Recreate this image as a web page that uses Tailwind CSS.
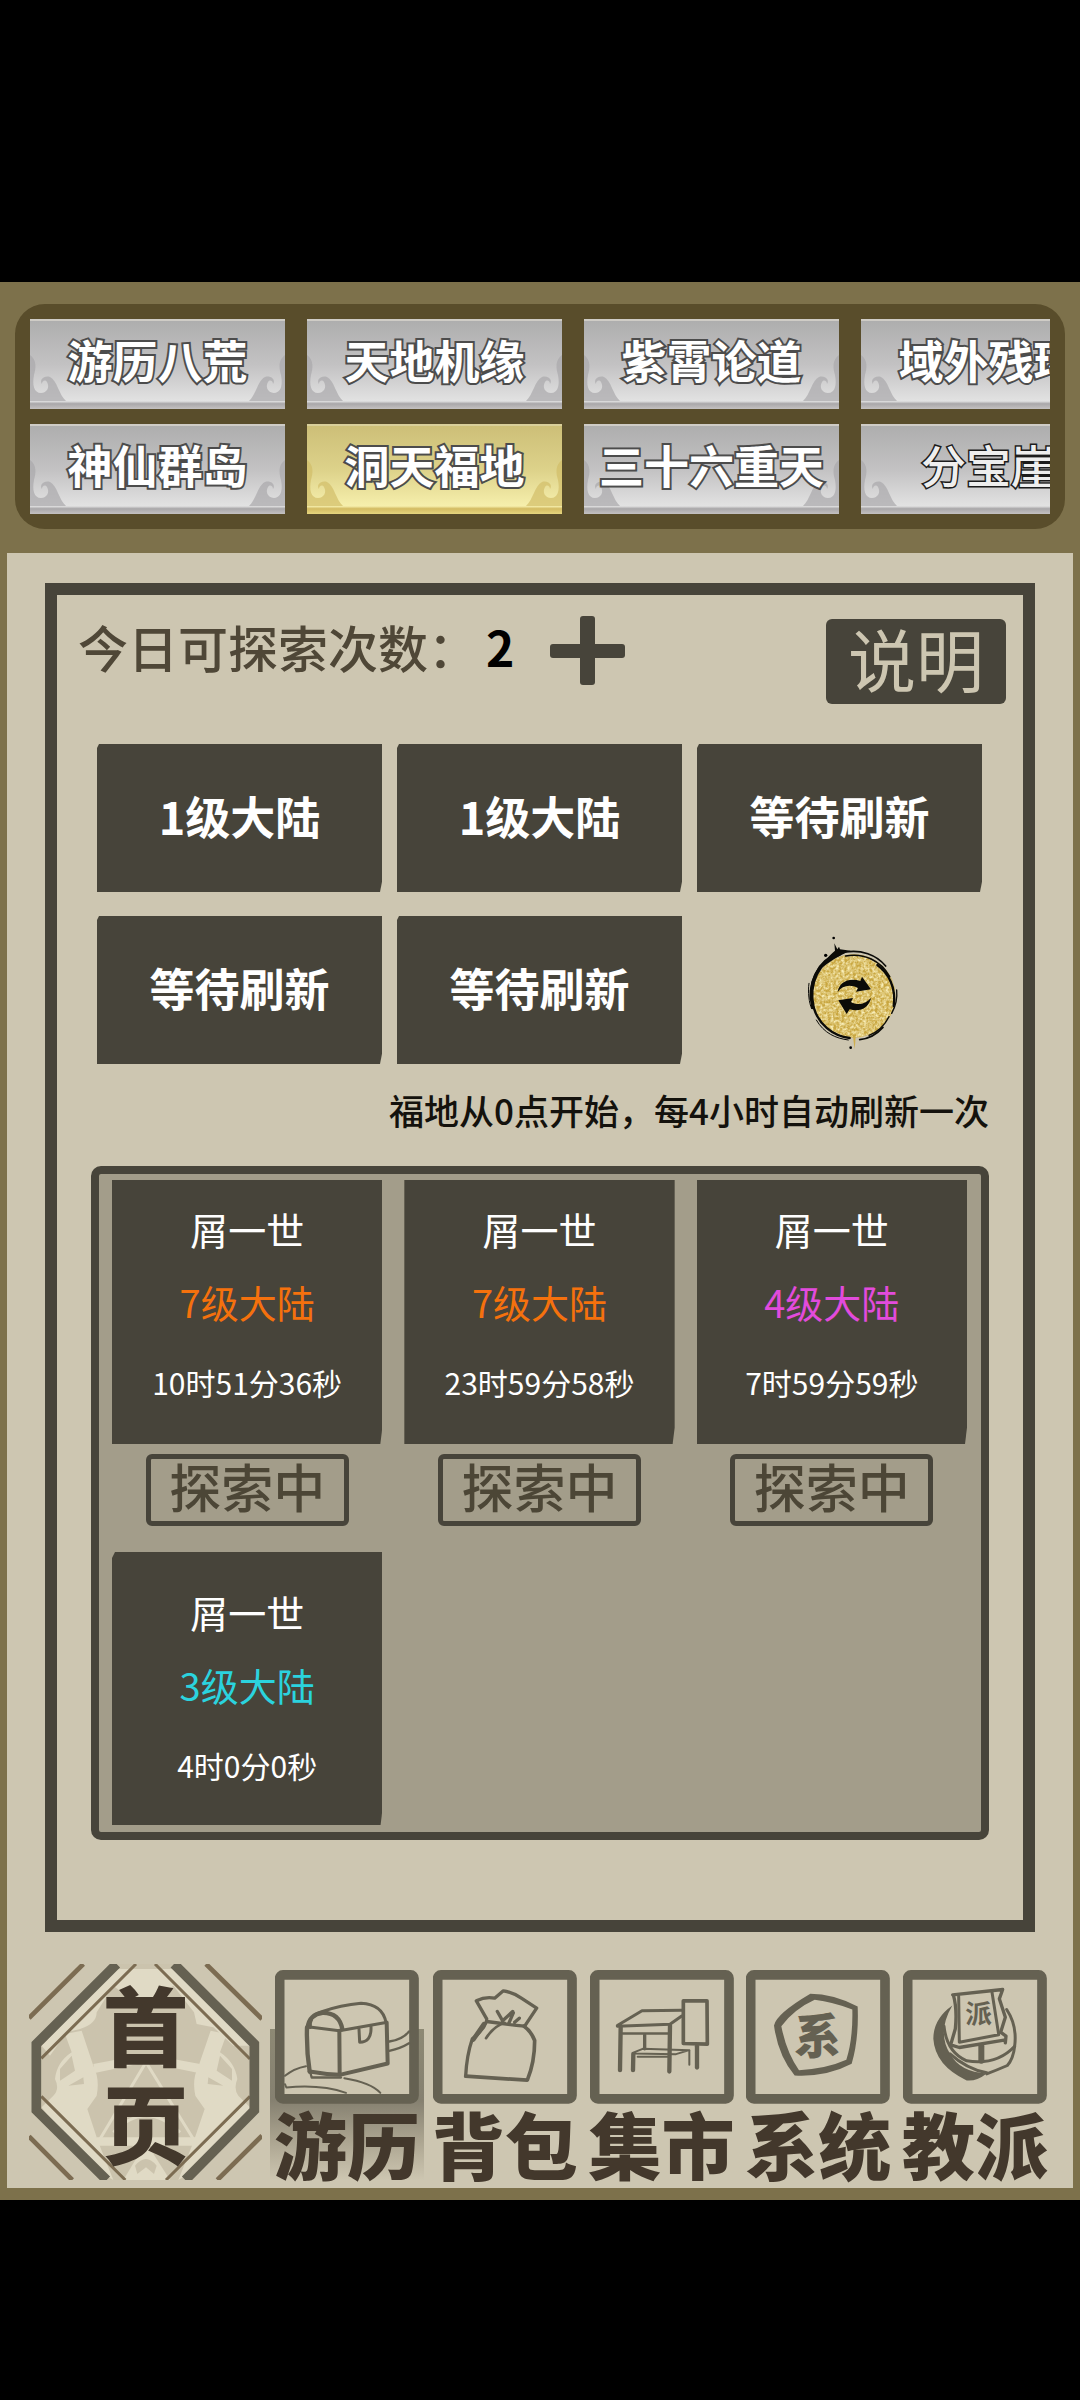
<!DOCTYPE html>
<html lang="zh-CN">
<head>
  <meta charset="UTF-8" />
  <meta name="viewport" content="width=device-width, initial-scale=1.0" />
  <title>洞天福地</title>
  <script src="https://cdn.jsdelivr.net/npm/@tailwindcss/browser@4"></script>
</head>
<body class="bg-black min-h-screen pt-[282px] font-['Noto_Sans_CJK_SC',sans-serif]">

<!-- shared shapes -->
<svg class="hidden">
  <symbol id="horn" viewBox="0 0 36 46">
    <path d="M0 0 C7 5 6 13 4 20 C2 30 4 38 11 38 C17 38 20 32 17 27 C15 24 12 26 12 29 C9 25 14 20 20 22 C27 25 29 40 36 46 L0 46 Z" fill="currentColor"/>
  </symbol>
</svg>

<main class="bg-[#7d714b] pt-[22px] pb-3">

  <!-- Top tabs -->
  <nav class="mx-[15px] p-[15px] rounded-[30px] bg-[#594d2b]">
    <div class="grid grid-rows-2 grid-flow-col auto-cols-[255px] gap-x-[22px] gap-y-[15px] overflow-hidden">
      <button class="relative h-[90px] pb-3 border-t-2 border-[#cfccc6] bg-[linear-gradient(#aeaeae,#c3c2c3_50%,#e2e2e2_91%,#a9a7a9_94%,#c4c1c1)] text-[45px] leading-none font-bold text-white [-webkit-text-stroke:4px_#4c4c4c] [paint-order:stroke_fill]">
        <svg class="absolute left-0 bottom-2 w-9 h-[46px] text-[#a9a8ab]/70"><use href="#horn"/></svg>
        <svg class="absolute right-0 bottom-2 w-9 h-[46px] text-[#a9a8ab]/70 -scale-x-100"><use href="#horn"/></svg>
        <span class="relative">游历八荒</span>
      </button>
      <button class="relative h-[90px] pb-3 border-t-2 border-[#cfccc6] bg-[linear-gradient(#aeaeae,#c3c2c3_50%,#e2e2e2_91%,#a9a7a9_94%,#c4c1c1)] text-[45px] leading-none font-bold text-white [-webkit-text-stroke:4px_#4c4c4c] [paint-order:stroke_fill]">
        <svg class="absolute left-0 bottom-2 w-9 h-[46px] text-[#a9a8ab]/70"><use href="#horn"/></svg>
        <svg class="absolute right-0 bottom-2 w-9 h-[46px] text-[#a9a8ab]/70 -scale-x-100"><use href="#horn"/></svg>
        <span class="relative">神仙群岛</span>
      </button>
      <button class="relative h-[90px] pb-3 border-t-2 border-[#cfccc6] bg-[linear-gradient(#aeaeae,#c3c2c3_50%,#e2e2e2_91%,#a9a7a9_94%,#c4c1c1)] text-[45px] leading-none font-bold text-white [-webkit-text-stroke:4px_#4c4c4c] [paint-order:stroke_fill]">
        <svg class="absolute left-0 bottom-2 w-9 h-[46px] text-[#a9a8ab]/70"><use href="#horn"/></svg>
        <svg class="absolute right-0 bottom-2 w-9 h-[46px] text-[#a9a8ab]/70 -scale-x-100"><use href="#horn"/></svg>
        <span class="relative">天地机缘</span>
      </button>
      <button class="relative h-[90px] pb-3 border-t-2 border-[#d9cf9a] bg-[linear-gradient(#cdbf78,#ddd28a_50%,#f6efac_91%,#d3bb62_94%,#e6d67f)] text-[45px] leading-none font-bold text-white [-webkit-text-stroke:4px_#4c4c4c] [paint-order:stroke_fill]">
        <svg class="absolute left-0 bottom-2 w-9 h-[46px] text-[#d2bd68]/70"><use href="#horn"/></svg>
        <svg class="absolute right-0 bottom-2 w-9 h-[46px] text-[#d2bd68]/70 -scale-x-100"><use href="#horn"/></svg>
        <span class="relative">洞天福地</span>
      </button>
      <button class="relative h-[90px] pb-3 border-t-2 border-[#cfccc6] bg-[linear-gradient(#aeaeae,#c3c2c3_50%,#e2e2e2_91%,#a9a7a9_94%,#c4c1c1)] text-[45px] leading-none font-bold text-white [-webkit-text-stroke:4px_#4c4c4c] [paint-order:stroke_fill]">
        <svg class="absolute left-0 bottom-2 w-9 h-[46px] text-[#a9a8ab]/70"><use href="#horn"/></svg>
        <svg class="absolute right-0 bottom-2 w-9 h-[46px] text-[#a9a8ab]/70 -scale-x-100"><use href="#horn"/></svg>
        <span class="relative">紫霄论道</span>
      </button>
      <button class="relative h-[90px] pb-3 border-t-2 border-[#cfccc6] bg-[linear-gradient(#aeaeae,#c3c2c3_50%,#e2e2e2_91%,#a9a7a9_94%,#c4c1c1)] text-[45px] leading-none font-bold text-white [-webkit-text-stroke:4px_#4c4c4c] [paint-order:stroke_fill]">
        <svg class="absolute left-0 bottom-2 w-9 h-[46px] text-[#a9a8ab]/70"><use href="#horn"/></svg>
        <svg class="absolute right-0 bottom-2 w-9 h-[46px] text-[#a9a8ab]/70 -scale-x-100"><use href="#horn"/></svg>
        <span class="relative">三十六重天</span>
      </button>
      <button class="relative h-[90px] pb-3 border-t-2 border-[#cfccc6] bg-[linear-gradient(#aeaeae,#c3c2c3_50%,#e2e2e2_91%,#a9a7a9_94%,#c4c1c1)] text-[45px] leading-none font-bold text-white [-webkit-text-stroke:4px_#4c4c4c] [paint-order:stroke_fill]">
        <svg class="absolute left-0 bottom-2 w-9 h-[46px] text-[#a9a8ab]/70"><use href="#horn"/></svg>
        <span class="relative">域外残环</span>
      </button>
      <button class="relative h-[90px] pb-3 border-t-2 border-[#cfccc6] bg-[linear-gradient(#aeaeae,#c3c2c3_50%,#e2e2e2_91%,#a9a7a9_94%,#c4c1c1)] text-[45px] leading-none font-medium text-[#eeeeee] [-webkit-text-stroke:3px_#1c1c1c] [paint-order:stroke_fill]">
        <svg class="absolute left-0 bottom-2 w-9 h-[46px] text-[#a9a8ab]/70"><use href="#horn"/></svg>
        <span class="relative">分宝崖</span>
      </button>
    </div>
  </nav>

  <section class="mt-6 mx-[7px] pt-[30px] pb-2 bg-[#cdc6b1]">

    <div class="mx-[38px] pt-6 pb-20 border-12 border-[#47443a]">

      <!-- Remaining explorations -->
      <div class="flex items-start justify-between pl-[21px] pr-[17px]">
        <div class="flex items-center h-[62px]">
          <span class="pb-2 text-[50px] leading-none font-medium text-[#4f4737] whitespace-nowrap">今日可探索次数：</span>
          <span class="ml-2 pb-2 text-5xl leading-none font-bold text-black">2</span>
          <button class="ml-9" aria-label="增加次数">
            <svg class="w-[75px] h-[69px]" viewBox="0 0 75 69" fill="#47443a">
              <rect x="0" y="28" width="75" height="14" rx="3"/>
              <rect x="30" y="0" width="15" height="69" rx="3"/>
            </svg>
          </button>
        </div>
        <button class="w-[180px] h-[85px] pb-2 rounded-md bg-[#47443a] text-[68px] leading-none text-[#cdc6b1]">说明</button>
      </div>

      <!-- Lands -->
      <div class="mt-10 pl-10 pr-[41px] grid grid-cols-3 gap-x-[15px] gap-y-6">
        <button class="h-[148px] pb-1 bg-[#47443a] text-[45px] font-bold text-white [clip-path:polygon(2px_0,100%_0,100%_93%,calc(100%-2px)_100%,0_100%,0_4px)]">1级大陆</button>
        <button class="h-[148px] pb-1 bg-[#47443a] text-[45px] font-bold text-white [clip-path:polygon(2px_0,100%_0,100%_93%,calc(100%-2px)_100%,0_100%,0_4px)]">1级大陆</button>
        <button class="h-[148px] pb-1 bg-[#47443a] text-[45px] font-bold text-white [clip-path:polygon(2px_0,100%_0,100%_93%,calc(100%-2px)_100%,0_100%,0_4px)]">等待刷新</button>
        <button class="h-[148px] pb-1 bg-[#47443a] text-[45px] font-bold text-white [clip-path:polygon(2px_0,100%_0,100%_93%,calc(100%-2px)_100%,0_100%,0_4px)]">等待刷新</button>
        <button class="h-[148px] pb-1 bg-[#47443a] text-[45px] font-bold text-white [clip-path:polygon(2px_0,100%_0,100%_93%,calc(100%-2px)_100%,0_100%,0_4px)]">等待刷新</button>
        <button class="flex items-center justify-center pl-7" aria-label="刷新">
          <svg class="w-[130px] h-[140px]" viewBox="0 0 390 420">
            <defs>
              <filter id="gold" x="0" y="0" width="100%" height="100%">
                <feTurbulence type="fractalNoise" baseFrequency="0.12" numOctaves="3" seed="4"/>
                <feColorMatrix values="0 0 0 0 0.94  0 0 0 0 0.85  0 0 0 0 0.48  2 0 0 0 -0.6"/>
                <feComposite in2="SourceGraphic" operator="in"/>
              </filter>
            </defs>
            <circle cx="194" cy="228" r="125" fill="#c9a741"/>
            <circle cx="194" cy="228" r="124" fill="#fff" filter="url(#gold)"/>
            <g fill="none" stroke="#0b0b08" stroke-linecap="round">
              <path d="M72 262 C55 190 90 120 150 103" stroke-width="11"/>
              <path d="M64 235 C62 170 95 112 170 96 C215 88 262 104 290 138" stroke-width="5"/>
              <path d="M170 108 C225 98 275 122 302 170" stroke-width="5"/>
              <path d="M265 135 C300 160 322 205 314 258" stroke-width="7"/>
              <path d="M323 210 C326 240 318 262 308 280" stroke-width="4"/>
              <path d="M300 290 C284 322 262 338 240 346" stroke-width="4"/>
              <path d="M74 262 C88 312 130 348 182 354" stroke-width="7"/>
              <path d="M82 300 C105 340 140 355 178 360" stroke-width="3"/>
              <path d="M212 359 C240 356 264 342 282 322" stroke-width="5"/>
              <path d="M60 190 C56 215 60 250 68 266" stroke-width="3"/>
            </g>
            <path d="M88 152 C105 120 125 104 138 92 L136 70 L145 88 L150 80 L153 88 L185 92 C150 106 115 128 88 152 Z" fill="#0b0b08"/>
            <circle cx="134" cy="54" r="4"/><circle cx="110" cy="106" r="5"/><circle cx="185" cy="383" r="4"/>
            <path d="M192 350 L200 350 L197 388 Z" fill="#cfae4b"/>
            <g fill="#0b0b08">
              <path d="M146 216 C150 188 178 172 214 183 L219 170 L246 208 L201 215 L207 204 C184 192 160 196 146 216 Z"/>
              <path d="M246 234 C240 262 214 278 182 268 L173 282 L148 241 L192 234 L186 246 C206 258 230 252 246 234 Z"/>
            </g>
          </svg>
        </button>
      </div>

      <p class="mt-[22px] mb-8 pr-[34px] text-right text-[35px] leading-[48px] font-medium text-[#14120d]">福地从0点开始，每4小时自动刷新一次</p>

      <!-- Running explorations -->
      <div class="mx-[34px] pt-[6px] pb-[7px] pl-[13px] pr-[14px] border-8 border-[#47443a] rounded-[10px] bg-[#a39d8a]">
        <div class="h-[645px] overflow-hidden">
          <div class="-mt-[11px] grid grid-cols-3 gap-x-[22px] gap-y-[26px] text-center text-[38px] leading-[56px] text-white">
            <div>
              <div class="h-[275px] pb-10 flex flex-col justify-end bg-[#47443a] [clip-path:polygon(0_0,100%_0,100%_94%,calc(100%-2px)_100%,0_100%)]">
                <p>屑一世</p>
                <p class="mt-[17px] text-[#f5710d]">7级大陆</p>
                <p class="mt-[30px] text-[30px] leading-[44px]">10时51分36秒</p>
              </div>
              <button class="mt-[10px] w-[203px] h-[72px] pb-2 border-5 border-[#47443a] rounded-md text-[52px] leading-none font-medium text-[#4c4636]">探索中</button>
            </div>
            <div>
              <div class="h-[275px] pb-10 flex flex-col justify-end bg-[#47443a] [clip-path:polygon(0_0,100%_0,100%_94%,calc(100%-2px)_100%,0_100%)]">
                <p>屑一世</p>
                <p class="mt-[17px] text-[#f5710d]">7级大陆</p>
                <p class="mt-[30px] text-[30px] leading-[44px]">23时59分58秒</p>
              </div>
              <button class="mt-[10px] w-[203px] h-[72px] pb-2 border-5 border-[#47443a] rounded-md text-[52px] leading-none font-medium text-[#4c4636]">探索中</button>
            </div>
            <div>
              <div class="h-[275px] pb-10 flex flex-col justify-end bg-[#47443a] [clip-path:polygon(0_0,100%_0,100%_94%,calc(100%-2px)_100%,0_100%)]">
                <p>屑一世</p>
                <p class="mt-[17px] text-[#e24bdc]">4级大陆</p>
                <p class="mt-[30px] text-[30px] leading-[44px]">7时59分59秒</p>
              </div>
              <button class="mt-[10px] w-[203px] h-[72px] pb-2 border-5 border-[#47443a] rounded-md text-[52px] leading-none font-medium text-[#4c4636]">探索中</button>
            </div>
            <div>
              <div class="h-[275px] pb-10 flex flex-col justify-end bg-[#47443a] [clip-path:polygon(3px_0,100%_0,100%_94%,calc(100%-2px)_100%,0_100%,0_6px)]">
                <p>屑一世</p>
                <p class="mt-[17px] text-[#2bd3de]">3级大陆</p>
                <p class="mt-[30px] text-[30px] leading-[44px]">4时0分0秒</p>
              </div>
            </div>
          </div>
        </div>
      </div>
    </div>

    <!-- Bottom menu -->
    <nav class="mt-8 pl-[22px] pr-[26px] flex items-start justify-between text-[#43382c]">
      <a href="#" class="relative w-[233px] h-[216px] flex flex-col items-center justify-center">
        <svg class="absolute inset-0 w-full h-full" viewBox="87 555 699 648">
          <path d="M346 555 H520 L764 795 V995 L556 1203 H324 L108 995 V795 Z" fill="#cbc3ad"/>
          <clipPath id="oct"><path d="M346 555 H520 L764 795 V995 L556 1203 H324 L108 995 V795 Z"/></clipPath>
          <g clip-path="url(#oct)">
            <g fill="#e0dac5">
              <path d="M125 800 L350 570 L520 570 L750 800 L700 800 L640 745 L590 735 L582 700 L520 620 L430 690 L340 620 L290 700 Q290 735 240 750 L200 760 L150 830 Z"/>
              <path d="M195 765 L245 755 L280 860 Q300 900 290 950 L262 990 L295 1090 L340 1203 L250 1150 L125 985 L160 950 Q180 930 165 900 Q170 850 215 820 Z"/>
              <path d="M680 765 L632 755 L596 860 Q575 900 586 950 L614 990 L580 1090 L535 1203 L625 1150 L750 985 L715 950 Q700 930 712 900 Q705 850 660 820 Z"/>
              <path d="M280 855 L438 825 L600 855 L596 882 L438 850 L284 882 Z"/>
              <path d="M290 1075 H590 V1100 H290 Z"/>
              <path d="M438 1090 L510 1203 H370 Z"/>
            </g>
            <g fill="none" stroke="#e0dac5" stroke-width="9">
              <path d="M438 850 L300 1080 M438 850 L580 1080 M340 1060 Q438 960 540 1060"/>
            </g>
            <g fill="#cbc3ad">
              <path d="M180 870 L215 830 L225 875 L180 905 Z M205 920 L250 895 L252 915 Z"/>
              <path d="M696 870 L660 830 L650 875 L696 905 Z M670 920 L625 895 L623 915 Z"/>
              <path d="M405 1160 Q438 1120 470 1160 L462 1185 L438 1165 L412 1185 Z"/>
            </g>
          </g>
          <g fill="none" stroke="#7c6c52">
            <path d="M87 717 L250 555 M618 555 L786 720 M87 1072 L217 1203 M786 1070 L652 1203" stroke-width="14"/>
            <path d="M124 838 L408 555 M465 555 L750 840 M124 952 L376 1203 M750 952 L498 1203" stroke-width="9"/>
          </g>
          <path d="M350 555 L109 795 V994 L320 1203 M522 555 L763 795 V994 L556 1203" fill="none" stroke="#656152" stroke-width="29"/>
        </svg>
        <span class="relative text-[86px] leading-[98px] font-black">首</span>
        <span class="relative text-[86px] leading-[98px] font-black">页</span>
      </a>

      <div class="mt-[6px] flex w-[773px] justify-between text-[73px] leading-[76px] font-black whitespace-nowrap">
        <a href="#" class="-mx-1 px-1 flex flex-col items-center bg-[linear-gradient(transparent_28%,#8d8974_28%,#858070_62%,#a9a28e_80%,#cdc6b1)]">
          <svg class="w-36 h-[134px]" viewBox="822 579 432 399" fill="none" stroke="#656152" stroke-linejoin="round" stroke-linecap="round">
            <rect x="836" y="592" width="403" height="372" rx="10" fill="#cdc6b1" stroke-width="29"/>
            <g stroke-width="9">
              <path d="M928 750 Q925 715 960 703 Q1020 682 1080 677 Q1145 680 1155 735"/>
              <path d="M920 750 Q925 710 965 706 Q1015 705 1024 755" stroke-width="13"/>
              <path d="M920 748 L1015 760 L1155 735"/>
              <path d="M918 750 Q916 820 926 882" stroke-width="13"/>
              <path d="M1015 760 L1016 890" stroke-width="12"/>
              <path d="M926 882 Q970 890 1016 892 L1160 858 L1157 735" stroke-width="12"/>
              <path d="M1074 755 L1076 794 Q1112 794 1110 748"/>
              <path d="M928 885 L932 900 L1020 900" stroke-width="7"/>
              <path d="M1165 792 Q1205 786 1224 762 M1165 820 Q1200 812 1224 797" stroke-width="7"/>
              <path d="M852 895 Q880 872 915 866 M852 920 L856 930 Q960 920 1035 946 M1030 902 Q1110 915 1138 946" stroke-width="6"/>
            </g>
          </svg>
          <span>游历</span>
        </a>
        <a href="#" class="w-36 flex flex-col items-center">
          <svg class="w-36 h-[134px]" viewBox="507 94 432 401" fill="none" stroke="#656152" stroke-linejoin="round" stroke-linecap="round">
            <rect x="521" y="108" width="403" height="372" rx="10" stroke-width="29"/>
            <g stroke-width="10">
              <path d="M668 240 L637 186 Q665 172 692 178 L718 156 Q745 160 772 178 L818 208 L782 262"/>
              <path d="M668 248 Q722 256 782 262 M700 218 L716 246 L746 218 M735 252 L748 222 M752 250 L766 238"/>
              <path d="M722 252 Q690 262 666 298" stroke-width="8"/>
              <path d="M668 246 Q658 275 625 300 Q608 350 605 412" />
              <path d="M660 256 L628 302" stroke-width="14"/>
              <path d="M605 412 L790 424 Q812 370 812 305 Q800 275 780 262" stroke-width="11"/>
            </g>
          </svg>
          <span>背包</span>
        </a>
        <a href="#" class="w-36 flex flex-col items-center">
          <svg class="w-36 h-[134px]" viewBox="982 94 432 401" fill="none" stroke="#656152" stroke-linejoin="round" stroke-linecap="round">
            <rect x="996" y="108" width="403" height="372" rx="10" stroke-width="29"/>
            <g stroke-width="9">
              <path d="M1064 260 L1138 216 L1258 214 M1064 262 L1222 256 L1256 232"/>
              <path d="M1080 284 H1218" stroke-width="7"/>
              <path d="M1074 266 L1072 394 M1222 260 L1220 398" stroke-width="13"/>
              <path d="M1146 288 V330" stroke-width="10"/>
              <path d="M1110 342 L1140 330 L1280 334 L1240 346 L1110 344 M1125 354 L1216 354" stroke-width="6"/>
              <path d="M1112 346 L1111 394" stroke-width="13"/>
              <path d="M1280 336 L1280 378" stroke-width="6"/>
              <path d="M1262 186 H1333 L1334 316 L1262 314 Z" stroke-width="11"/>
              <path d="M1303 322 V386" stroke-width="13"/>
            </g>
          </svg>
          <span>集市</span>
        </a>
        <a href="#" class="w-36 flex flex-col items-center">
          <svg class="w-36 h-[134px]" viewBox="69 94 432 401" stroke-linejoin="round">
            <rect x="83" y="108" width="403" height="372" rx="10" fill="none" stroke="#656152" stroke-width="29"/>
            <path fill="#656152" fill-rule="evenodd" d="M262 165 Q330 165 404 203 Q408 300 386 375 Q310 415 215 410 Q165 350 153 260 Q160 225 262 165 Z M275 183 Q215 210 175 262 Q190 340 228 394 Q310 390 370 363 Q390 300 388 212 Q330 190 275 183 Z"/>
            <text x="284" y="342" text-anchor="middle" font-size="140" font-weight="900" fill="#656152">系</text>
          </svg>
          <span>系统</span>
        </a>
        <a href="#" class="w-36 flex flex-col items-center">
          <svg class="w-36 h-[134px]" viewBox="549 94 432 401" fill="none" stroke="#656152" stroke-linejoin="round" stroke-linecap="round">
            <rect x="563" y="108" width="403" height="372" rx="10" stroke-width="29"/>
            <path d="M697 200 Q640 240 640 300 Q645 380 740 425 Q770 428 800 404 Q720 400 690 345 Q650 280 697 200 Z" fill="#656152" stroke="none"/>
            <g stroke-width="9">
              <path d="M672 262 Q680 340 740 366 Q830 380 884 322 Q892 260 860 212"/>
              <path d="M884 322 Q880 360 862 380 Q830 394 800 405 M690 345 Q740 390 800 402"/>
              <path d="M698 168 L848 152 L838 180 L856 235 L842 280 L858 292 L856 312 M700 168 Q712 210 706 270 L692 318 L718 326 L852 304" stroke-width="10"/>
              <path d="M716 172 L718 310 L836 288 M816 160 L836 286"/>
              <path d="M784 322 V366" stroke-width="18"/>
            </g>
            <text x="776" y="254" text-anchor="middle" font-size="80" font-weight="700" fill="#656152" stroke="none">派</text>
          </svg>
          <span>教派</span>
        </a>
      </div>
    </nav>
  </section>
</main>
</body>
</html>
